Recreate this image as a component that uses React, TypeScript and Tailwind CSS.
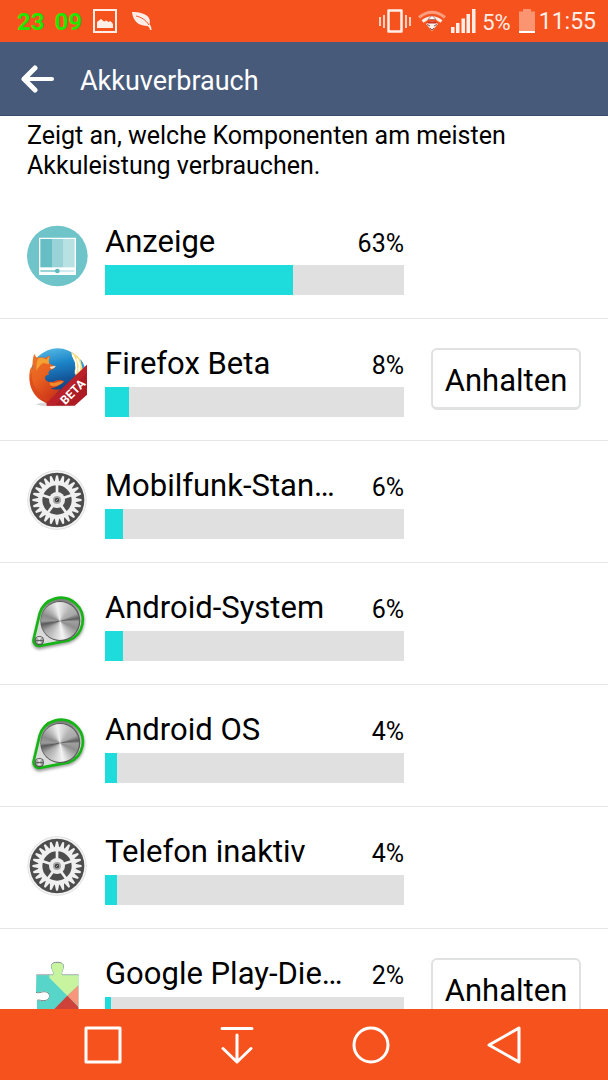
import React from "react";

type Usage = {
  name: string;
  percent: number;
  icon: React.ReactNode;
  canStop?: boolean;
};

const DisplayIcon = () => (
  <svg viewBox="36 33 180 180" className="size-[60px] overflow-visible" aria-hidden="true">
    <circle cx="127" cy="123" r="91" fill="#6fc4c9" />
    <path d="M72 68h111v112H72z" fill="#fff" />
    <path d="M76 72h35v85H76z" fill="#66bec4" />
    <path d="M111 72h33v85h-33z" fill="#99d3d8" />
    <path d="M144 72h35v85h-35z" fill="#b8e1e4" />
    <path d="M76 168h51" stroke="#66bec4" strokeWidth="4" />
    <path d="M127 168h51" stroke="#b8e1e4" strokeWidth="4" />
    <circle cx="127" cy="168" r="7" fill="#5bb9c0" />
  </svg>
);

const FirefoxBetaIcon = () => (
  <svg viewBox="36 39 180 180" className="size-[60px] overflow-visible" aria-hidden="true">
    <defs>
      <linearGradient id="globe" x1="0.3" y1="0" x2="0.5" y2="1">
        <stop offset="0" stopColor="#55b8e4" />
        <stop offset="0.3" stopColor="#1c86c8" />
        <stop offset="0.6" stopColor="#14569a" />
        <stop offset="1" stopColor="#0d2f66" />
      </linearGradient>
      <linearGradient id="fox" x1="0" y1="0" x2="0.6" y2="1">
        <stop offset="0" stopColor="#ec7a2a" />
        <stop offset="0.5" stopColor="#e8601f" />
        <stop offset="1" stopColor="#c83018" />
      </linearGradient>
    </defs>
    <ellipse cx="122" cy="208" rx="58" ry="6" fill="#d6d6d6" />
    <circle cx="128" cy="122" r="82" fill="url(#globe)" />
    <path
      d="M168 50c24 12 40 34 45 62l-2 30-34 24c8-14 10-26 6-40l-4-20 4-8-2-14-8-16z"
      fill="#f8df7e"
    />
    <path d="M172 58l10 22 2 22-3 14M186 70l8 20-2 20" stroke="#fff" strokeWidth="5" fill="none" />
    <path d="M196 72c10 12 15 26 16 42l-8-6z" fill="#2f9cd8" />
    <path
      d="M58 56c2 6 5 9 9 12 8-2 17-2 24 1 4-4 8-6 15-7-4 6-6 12-4 20l2 5c8 2 14 5 16 9-1 5-8 8-14 9-6 4-7 10-4 14-8 0-12 4-12 9 0 8 8 13 18 13 10 0 16-6 26-6 6 0 12 2 14 5-4 4-9 5-13 8-8 8-18 12-29 12 10 5 20 4 30 2l-36 44c-28-8-48-28-55-58-4-20-3-38 4-54 0 4 2 7 3 9 1-18 0-34 6-47z"
      fill="url(#fox)"
    />
    <path
      d="M50 112c-2 34 12 64 56 82l6 8c-36-4-62-28-67-62 0-10 2-20 5-28z"
      fill="#d9411b"
      opacity="0.6"
    />
    <path
      d="M70 70c10-2 18-1 24 4 4-5 6-7 10-8-4 10-3 16-1 22l-18-4c-10 6-16 14-20 24-2-14-1-26 5-38z"
      fill="#f5a032"
    />
    <path d="M106 142c14 6 24-6 40-3-8 10-20 18-36 14-6-2-8-7-4-11z" fill="#f08a2c" />
    <path d="M104 96c6-3 13-3 18-4-1 5-6 8-13 10z" fill="#f9e0c4" />
    <path d="M216 89v90l-37 33H95v-8z" fill="#ad1b24" />
    <path d="M216 89v24l-98 99H95v-8z" fill="#c4262d" opacity="0.6" />
    <text
      x="173"
      y="183"
      transform="rotate(-45 173 170)"
      textAnchor="middle"
      fontFamily="Roboto, sans-serif"
      fontWeight="700"
      fontSize="36"
      fill="#fff"
    >
      BETA
    </text>
  </svg>
);

const TEETH = Array.from({ length: 24 }, (_, i) => i * 15);
const SPOKES = [0, 72, 144, 216, 288];

const GearIcon = () => (
  <svg viewBox="36 32 180 180" className="size-[60px] overflow-visible" aria-hidden="true">
    <circle cx="126" cy="122" r="89" fill="#dcdcdc" />
    <circle cx="126" cy="122" r="87" fill="#f3f3f3" />
    <circle cx="126" cy="122" r="82" fill="#4d4d4d" />
    <g fill="#f0f0f0">
      {TEETH.map((angle) => (
        <path
          key={angle}
          d="M119 68l4-19q3-3 6 0l4 19z"
          transform={`rotate(${angle} 126 122)`}
        />
      ))}
      <circle cx="126" cy="122" r="57" />
    </g>
    <circle cx="126" cy="122" r="44" fill="#4d4d4d" />
    {SPOKES.map((angle) => (
      <path
        key={angle}
        d="M122 72h8v36h-8z"
        fill="#f0f0f0"
        transform={`rotate(${angle} 126 122)`}
      />
    ))}
    <circle cx="126" cy="122" r="24" fill="#ececec" />
    <circle cx="126" cy="122" r="12" fill="#a5a5a5" />
    <circle cx="126" cy="122" r="7" fill="#444" />
    <path d="M123 125l6-6" stroke="#ccc" strokeWidth="2" />
  </svg>
);

const AndroidIcon = () => (
  <div className="relative size-[60px]">
    <svg viewBox="36 38 180 180" className="size-full overflow-visible" aria-hidden="true">
      <defs>
        <filter id="knobShadow" x="-20%" y="-20%" width="140%" height="140%">
          <feGaussianBlur stdDeviation="5" />
        </filter>
        <linearGradient id="plate" x1="0" y1="0" x2="0" y2="1">
          <stop offset="0" stopColor="#777" />
          <stop offset="0.5" stopColor="#d8d8d8" />
          <stop offset="1" stopColor="#ddd" />
        </linearGradient>
      </defs>
      <path
        d="M74 103A66 66 0 1 1 161 183L78 200A17 17 0 0 1 56 179Z"
        fill="#555"
        stroke="#555"
        strokeWidth="8"
        opacity="0.6"
        filter="url(#knobShadow)"
        transform="translate(1 5)"
      />
      <path
        d="M74 103A66 66 0 1 1 161 183L78 199A17 17 0 0 1 56 179Z"
        fill="url(#plate)"
        stroke="#16b516"
        strokeWidth="8"
        strokeLinejoin="round"
      />
      <circle cx="136" cy="125" r="60" fill="#5c5c5c" />
      <circle cx="73" cy="184" r="14" fill="#555" />
      <circle cx="73" cy="183" r="11" fill="#aaa" />
      <path d="M73 183L66 174H80ZM73 183L67 192H79Z" fill="#e5e5e5" />
      <path d="M62 184h22" stroke="#555" strokeWidth="3" />
    </svg>
    <div className="absolute left-[14px] top-[10px] size-[38px] rounded-full bg-[conic-gradient(#e4e4e4_0deg,#b5b5b5_40deg,#a8a8a8_65deg,#5e5e5e_82deg,#a0a0a0_92deg,#8e8e8e_115deg,#bcbcbc_140deg,#f4f4f4_170deg,#d0d0d0_200deg,#a8a8a8_235deg,#5a5a5a_260deg,#9c9c9c_270deg,#8a8a8a_290deg,#bdbdbd_320deg,#f0f0f0_350deg,#e4e4e4_360deg)]" />
  </div>
);

const PlayServicesIcon = () => (
  <svg viewBox="36 84 180 180" className="size-[60px] overflow-visible" aria-hidden="true">
    <defs>
      <clipPath id="puzzle">
        <path d="M64 136h48c6 0 4-9 1-14-8-16-3-24 14-24s22 8 15 24c-3 6-4 14 3 14h46v132H66v-58c10 3 8 3 20 3 22 0 24-28 2-29-10 0-18 6-25 2z" />
      </clipPath>
    </defs>
    <path
      d="M64 135h48c6 0 4-9 1-14-8-16-3-24 14-24s22 8 15 24c-3 6-4 14 3 14h46M63 187c7 4 15-2 25-2 22 1 20 27-2 27-10 0-10-3-20-1"
      fill="none"
      stroke="#777"
      strokeWidth="3"
    />
    <g clipPath="url(#puzzle)">
      <path d="M60 90h140v180H60z" fill="#58d5c9" />
      <path d="M103 143l54 54 36-34V90h-90z" fill="#c8f4a0" />
      <path d="M157 197l36-34v70z" fill="#f7967a" />
      <path d="M157 197L88 268h105v-34z" fill="#ce4239" />
    </g>
  </svg>
);

const usages: Usage[] = [
  { name: "Anzeige", percent: 63, icon: <DisplayIcon /> },
  { name: "Firefox Beta", percent: 8, icon: <FirefoxBetaIcon />, canStop: true },
  { name: "Mobilfunk-Stan…", percent: 6, icon: <GearIcon /> },
  { name: "Android-System", percent: 6, icon: <AndroidIcon /> },
  { name: "Android OS", percent: 4, icon: <AndroidIcon /> },
  { name: "Telefon inaktiv", percent: 4, icon: <GearIcon /> },
  { name: "Google Play-Die…", percent: 2, icon: <PlayServicesIcon />, canStop: true },
];

const StatusBar = () => (
  <div className="flex h-[42px] shrink-0 items-center justify-between bg-[#f6521e] pl-[17px] pr-3 text-[#ffeee8]">
    <div className="flex items-center">
      <span className="flex gap-[10px] pt-px text-2xl font-bold text-[#22e600]">
        <span>23</span>
        <span>09</span>
      </span>
      <svg viewBox="0 0 24 24" className="ml-[11px] size-6" fill="none" aria-hidden="true">
        <path d="M1 1h22v22H1z" stroke="currentColor" strokeWidth="2" />
        <path d="M4 19v-6l4-3 3 2.500 2.500-1 2 1.500 2-1 2.500 3v4z" fill="currentColor" />
      </svg>
      <svg viewBox="0 0 20 20" className="ml-[15px] size-5" aria-hidden="true">
        <path
          d="M0 1c6 0 14 1 17 6 1 2 1 4 .5 6 1.500 2 2 4 2 6h-1.500c0-2-1-3-2.500-4C9 15 1 12 0 1z"
          fill="currentColor"
        />
        <path d="M4 5c5 1 10 4 13 9" stroke="#f6521e" strokeWidth="1" fill="none" />
      </svg>
    </div>
    <div className="flex items-center">
      <svg viewBox="0 0 32 26" className="h-[26px] w-8" fill="none" aria-hidden="true">
        <path d="M9.500 2.500h13v21h-13z" stroke="currentColor" strokeWidth="2.500" strokeLinejoin="round" />
        <path d="M1 9v9M5 7v13M27 7v13M31 9v9" stroke="currentColor" strokeWidth="1.600" />
      </svg>
      <svg viewBox="0 0 28 22" className="ml-[7px] h-[22px] w-7" fill="none" aria-hidden="true">
        <path d="M1 7.500C9 .5 19 .5 27 7.500" stroke="#fb9c7c" strokeWidth="3" />
        <path d="M4.500 11.500c6-5 13-5 19 0" stroke="currentColor" strokeWidth="3" />
        <path d="M8 14c4-3.500 8-3.500 12 0l-6 7z" fill="currentColor" />
        <path d="M14 5.500l4 4h-8z" fill="#fff" stroke="#8a4a4a" strokeWidth="0.700" />
        <path d="M9.500 12.500h9" stroke="#c5352b" strokeWidth="2" />
        <path d="M9 14.500l3 1.500M19 14.500l-3 1.500M12 18l2 2 2-2" stroke="#6b5555" strokeWidth="1" />
      </svg>
      <svg viewBox="0 0 25 24" className="ml-[5px] h-6 w-[25px]" aria-hidden="true">
        <path
          d="M0 18h3.500v6H0zM5 14h3.500v10H5zM10.500 9.500H14V24h-3.500zM15.500 5H19v19h-3.500zM21 0h3.500v24H21z"
          fill="currentColor"
        />
      </svg>
      <span className="ml-[6px] pt-[2px] text-[22px]">5%</span>
      <svg viewBox="0 0 16 24" className="ml-2 h-6 w-4" aria-hidden="true">
        <path d="M4 0h8v2.500h4V24H0V2.500h4z" fill="#fb9470" />
        <path d="M0 22h16v2H0z" fill="#fff" />
      </svg>
      <span className="ml-1 pt-[3px] text-[23px]">11:55</span>
    </div>
  </div>
);

const UsageRow = ({ name, percent, icon, canStop }: Usage) => (
  <li className="flex h-[122px] border-b border-[#e6e6e6] px-[27px] pt-[29px]">
    <div className="shrink-0">{icon}</div>
    <div className="ml-[18px] min-w-0 flex-1">
      <div className="flex h-[39px] items-baseline justify-between whitespace-nowrap">
        <span className="text-[31px] leading-8">{name}</span>
        <span className="text-[25px] leading-8">{percent}%</span>
      </div>
      <div className="h-[30px] bg-[#e0e0e0]">
        <div className="h-full bg-[#1fdcdc]" style={{ width: `${percent}%` }} />
      </div>
    </div>
    <div className="ml-[27px] w-[150px] shrink-0">
      {canStop && (
        <button
          type="button"
          className="h-[62px] w-full rounded-md border-2 border-b-3 border-[#dfe2e1] bg-white pt-[5px] text-[31px]"
        >
          Anhalten
        </button>
      )}
    </div>
  </li>
);

const NavBar = () => (
  <nav className="grid h-[71px] shrink-0 grid-cols-4 items-center justify-items-center bg-[#f6521e] px-9 text-white">
    <button type="button" aria-label="Letzte Apps">
      <svg viewBox="0 0 38 38" className="size-[38px]" fill="none" stroke="currentColor" strokeWidth="3" strokeLinejoin="round">
        <path d="M2 2h34v34H2z" />
      </svg>
    </button>
    <button type="button" aria-label="Benachrichtigungen">
      <svg viewBox="0 0 38 38" className="size-[38px]" fill="none" stroke="currentColor" strokeWidth="3" strokeLinecap="round" strokeLinejoin="round">
        <path d="M4 2.500h30M19 9v27M5 22.500l14 13.500 14-13.500" />
      </svg>
    </button>
    <button type="button" aria-label="Startseite">
      <svg viewBox="0 0 38 38" className="size-[38px]" fill="none" stroke="currentColor" strokeWidth="3">
        <circle cx="19" cy="19" r="17" />
      </svg>
    </button>
    <button type="button" aria-label="Zurück">
      <svg viewBox="0 0 38 38" className="size-[38px]" fill="none" stroke="currentColor" strokeWidth="3" strokeLinejoin="round">
        <path d="M33 2v34L3 19z" />
      </svg>
    </button>
  </nav>
);

export const App = () => {
  return (
    <div className="flex h-screen flex-col bg-white font-['Roboto',sans-serif] text-black">
      <StatusBar />
      <header className="flex h-[74px] shrink-0 items-center border-b border-[#3a4a68] bg-[#475a7a] px-5 text-white">
        <button type="button" aria-label="Zurück">
          <svg viewBox="0 0 34 28" className="h-7 w-[34px]" fill="none" stroke="currentColor" strokeWidth="5" strokeLinecap="round" strokeLinejoin="round">
            <path d="M15 3L4 14l11 11" />
            <path d="M4 14h28" strokeWidth="4" />
          </svg>
        </button>
        <h1 className="ml-[26px] pt-[5px] text-[27px]">Akkuverbrauch</h1>
      </header>
      <main className="min-h-0 flex-1 overflow-y-auto [scrollbar-width:none]">
        <p className="mb-4 px-[27px] pt-[5px] text-[25px] leading-[30px]">
          Zeigt an, welche Komponenten am meisten Akkuleistung verbrauchen.
        </p>
        <ul>
          {usages.map((usage) => (
            <UsageRow key={usage.name} {...usage} />
          ))}
        </ul>
      </main>
      <NavBar />
    </div>
  );
};

export default App;
